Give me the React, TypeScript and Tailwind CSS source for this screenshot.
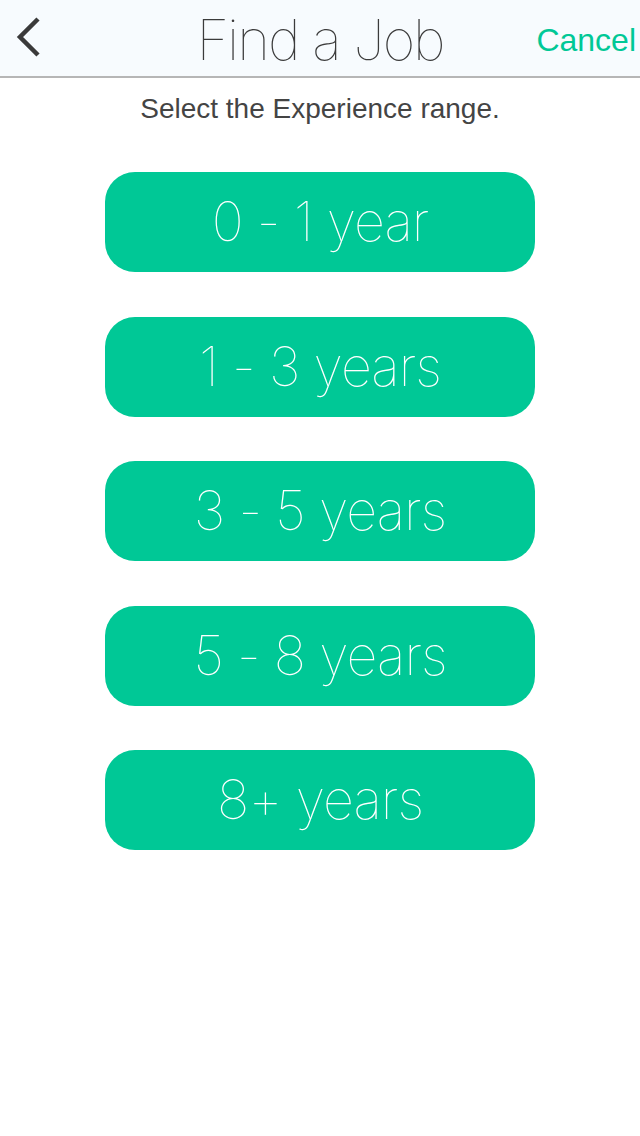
const RANGES = ['0 - 1 year', '1 - 3 years', '3 - 5 years', '5 - 8 years', '8+ years']

function BackChevron() {
    return (
        <svg width="30" height="44" viewBox="0 0 30 44" fill="none">
            <polyline points="24,4 6,22 24,40" stroke="#3a3a3a" strokeWidth="4.5" strokeLinejoin="miter" strokeLinecap="butt" />
        </svg>
    )
}

export default function App() {
    return (
        <div className="w-[640px] h-[1136px] bg-white flex flex-col" style={{ fontFamily: 'Inter, "Liberation Sans", sans-serif' }}>
            {/* Nav bar */}
            <div className="h-[78px] shrink-0 bg-[#f7fbfe] border-b-2 border-[#b6b6b6] flex items-center relative">
                <button className="w-[60px] h-full flex items-center justify-start pl-[14px] pb-[2px]">
                    <BackChevron />
                </button>
                <h1 className="absolute left-0 right-0 top-[5px] text-center text-[56px] leading-[70px] font-thin tracking-[-2px] text-[#3b3b3b] pointer-events-none">
                    Find a Job
                </h1>
                <button className="ml-auto pr-[4px] pt-[3px] text-[32px] text-[#00c896] font-['Liberation_Sans',sans-serif]">
                    Cancel
                </button>
            </div>

            <p className="text-center text-[28px] leading-[34px] text-[#444] mt-[14px] font-['Liberation_Sans',sans-serif]">
                Select the Experience range.
            </p>

            <div className="flex flex-col items-center gap-[44.5px] mt-[46px]">
                {RANGES.map(r => (
                    <button
                        key={r}
                        className="w-[430px] h-[100px] rounded-[30px] bg-[#00c896] text-white text-[54px] font-thin tracking-[-1px] leading-none flex items-center justify-center"
                    >
                        {r}
                    </button>
                ))}
            </div>
        </div>
    )
}
